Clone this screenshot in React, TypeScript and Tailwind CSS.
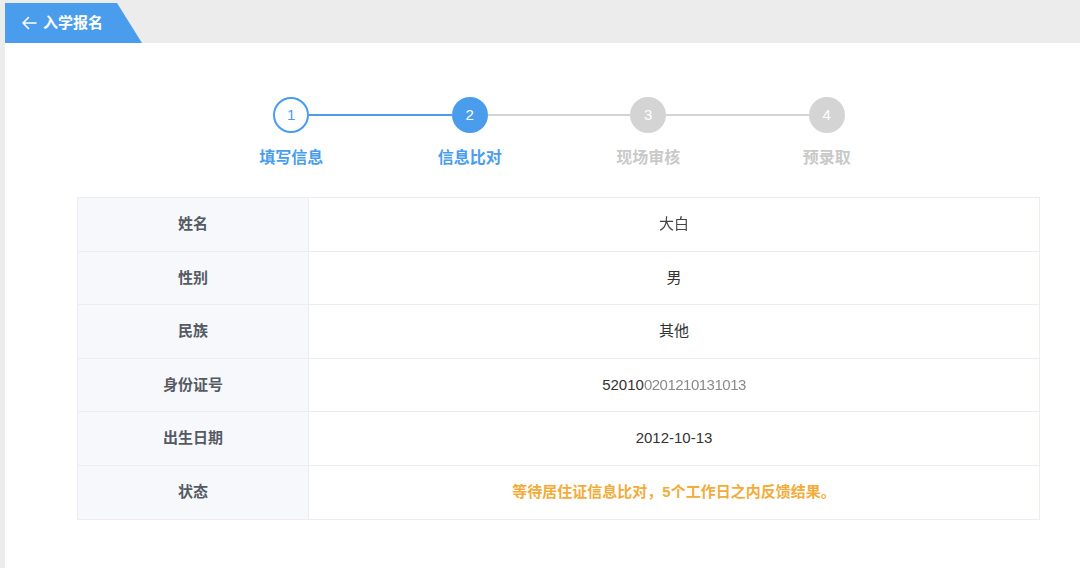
import React from 'react';

const steps = [
  { n: 1, label: '填写信息', state: 'done' },
  { n: 2, label: '信息比对', state: 'active' },
  { n: 3, label: '现场审核', state: 'todo' },
  { n: 4, label: '预录取', state: 'todo' },
];

const rows = [
  { k: '姓名', v: '大白', blur: true },
  { k: '性别', v: '男' },
  { k: '民族', v: '其他' },
  { k: '身份证号', v: '52010020121013', id: true },
  { k: '出生日期', v: '2012-10-13' },
  { k: '状态', v: '等待居住证信息比对，5个工作日之内反馈结果。', warn: true },
];

function Step({ n, label, state, idx }: { n: number; label: string; state: string; idx: number }) {
  const leftColor = idx === 0 ? 'bg-transparent' : idx <= 1 ? 'bg-[#4a9ded]' : 'bg-[#d4d4d4]';
  const rightColor = idx === 3 ? 'bg-transparent' : idx === 0 ? 'bg-[#4a9ded]' : 'bg-[#d4d4d4]';
  return (
    <div className="w-[178.5px] flex flex-col items-center">
      <div className="w-full flex items-center">
        <div className={`flex-1 h-[2px] ${leftColor}`} />
        {state === 'done' && (
          <div className="w-9 h-9 rounded-full border-2 border-[#4a9ded] bg-white text-[#4a9ded] flex items-center justify-center text-[15px]">
            {n}
          </div>
        )}
        {state === 'active' && (
          <div className="w-9 h-9 rounded-full bg-[#4a9ded] text-white flex items-center justify-center text-[15px]">
            {n}
          </div>
        )}
        {state === 'todo' && (
          <div className="w-9 h-9 rounded-full bg-[#d4d4d4] text-white flex items-center justify-center text-[15px]">
            {n}
          </div>
        )}
        <div className={`flex-1 h-[2px] ${rightColor}`} />
      </div>
      <div
        className={`mt-[14px] text-[16px] font-bold leading-[22px] ${
          state === 'todo' ? 'text-[#c9c9c9]' : 'text-[#4a9ded]'
        }`}
      >
        {label}
      </div>
    </div>
  );
}

export default function App() {
  return (
    <div
      className="w-[1080px] h-[568px] bg-[#ececec] flex flex-col overflow-hidden"
      style={{ fontFamily: '"Liberation Sans", "Noto Sans CJK SC", sans-serif' }}
    >
      {/* header tab */}
      <div className="h-[43px] pl-[5px] pt-[3px] shrink-0">
        <div className="w-[137px] h-[40px] bg-[#4a9ded] [clip-path:polygon(0_0,112px_0,137px_100%,0_100%)] flex items-center pl-[16px] gap-[6px] text-white">
          <svg width="16" height="14" viewBox="0 0 16 14" fill="none" stroke="white" strokeWidth="1.6" strokeLinecap="round" strokeLinejoin="round">
            <path d="M15 7H2M7.5 1.5L2 7l5.5 5.5" />
          </svg>
          <span className="text-[15px] font-bold">入学报名</span>
        </div>
      </div>

      {/* panel */}
      <div className="flex-1 ml-[5px] bg-white flex flex-col">
        <div className="pt-[54px] pl-[197px] flex">
          {steps.map((s, i) => (
            <Step key={s.n} n={s.n} label={s.label} state={s.state} idx={i} />
          ))}
        </div>

        <div className="mt-[28px] ml-[72px] w-[963px] border border-[#ebedf2]">
          {rows.map((r, i) => (
            <div
              key={r.k}
              className={`flex h-[53.5px] ${i < rows.length - 1 ? 'border-b border-[#ebedf2]' : ''}`}
            >
              <div className="w-[231px] bg-[#f7f8fb] border-r border-[#ebedf2] flex items-center justify-center text-[15px] font-bold text-[#555a63]">
                {r.k}
              </div>
              <div className="flex-1 flex items-center justify-center text-[15px] text-[#333]">
                {r.warn ? (
                  <span className="text-[#f2ac3a] font-bold">{r.v}</span>
                ) : r.id ? (
                  <span>
                    {r.v.slice(0, 5)}
                    <span className="text-[#8a8a8a] blur-[0.6px] tracking-[-0.5px]">{r.v.slice(5)}1013</span>
                  </span>
                ) : r.blur ? (
                  <span className="blur-[0.5px] text-[#444]">{r.v}</span>
                ) : (
                  r.v
                )}
              </div>
            </div>
          ))}
        </div>
      </div>
    </div>
  );
}
